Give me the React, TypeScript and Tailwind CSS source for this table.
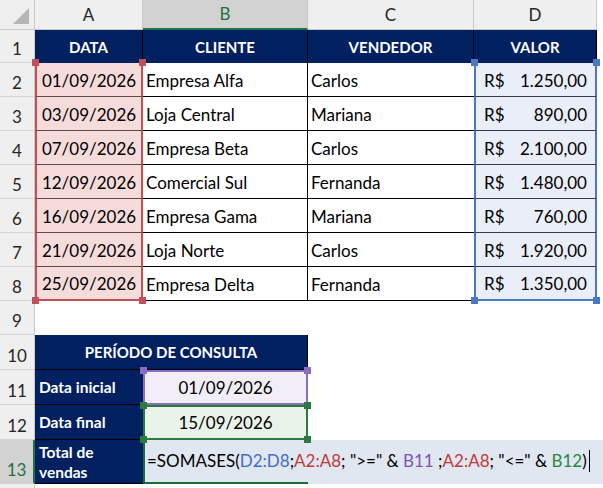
const data = [
  { d: "01/09/2026", c: "Empresa Alfa", v: "Carlos", val: "1.250,00" },
  { d: "03/09/2026", c: "Loja Central", v: "Mariana", val: "890,00" },
  { d: "07/09/2026", c: "Empresa Beta", v: "Carlos", val: "2.100,00" },
  { d: "12/09/2026", c: "Comercial Sul", v: "Fernanda", val: "1.480,00" },
  { d: "16/09/2026", c: "Empresa Gama", v: "Mariana", val: "760,00" },
  { d: "21/09/2026", c: "Loja Norte", v: "Carlos", val: "1.920,00" },
  { d: "25/09/2026", c: "Empresa Delta", v: "Fernanda", val: "1.350,00" },
];

const Handle = ({ className }: { className: string }) => (
  <span className={`absolute w-[7px] h-[7px] z-10 ${className}`} />
);

const RowHead = ({ n, active }: { n: number; active?: boolean }) => (
  <div
    className={`w-[35px] shrink-0 flex items-end justify-center pb-[2px] border-b border-[#d4d4d4] ${
      active ? "bg-[#d2d2d2] text-[#1e7145] border-r-2 border-r-[#1e7145]" : "bg-[#efefef] text-[#262626] border-r border-r-[#c8c8c8]"
    }`}
  >
    {n}
  </div>
);

export default function App() {
  return (
    <div className="w-[603px] h-[488px] overflow-hidden bg-white text-[17px] leading-[22px] text-black font-['Lato','Liberation_Sans',sans-serif]">
      {/* column letters */}
      <div className="flex h-[30px]">
        <div className="w-[35px] shrink-0 bg-[#efefef] border-r border-b border-[#c8c8c8] flex items-end justify-end p-[4px]">
          <svg width="18" height="18" viewBox="0 0 18 18">
            <polygon points="17,1 17,17 1,17" fill="#b5b5b5" />
          </svg>
        </div>
        <div className="w-[108px] shrink-0 bg-[#efefef] border-r border-b border-[#c8c8c8] flex items-center justify-center text-[#262626]">A</div>
        <div className="w-[165px] shrink-0 bg-[#d2d2d2] border-r border-r-[#c8c8c8] border-b-2 border-b-[#1e7145] flex items-center justify-center text-[#1e7145]">B</div>
        <div className="w-[166px] shrink-0 bg-[#efefef] border-r border-b border-[#c8c8c8] flex items-center justify-center text-[#262626]">C</div>
        <div className="w-[123px] shrink-0 bg-[#efefef] border-r border-b border-[#c8c8c8] flex items-center justify-center text-[#262626]">D</div>
        <div className="flex-1" />
      </div>

      {/* row 1 header */}
      <div className="flex h-[33px]">
        <RowHead n={1} />
        {["DATA", "CLIENTE", "VENDEDOR", "VALOR"].map((t, i) => (
          <div
            key={t}
            className={`shrink-0 bg-[#002060] text-white font-bold text-[15px] flex items-center justify-center border-r border-black ${
              ["w-[108px]", "w-[165px]", "w-[166px]", "w-[123px]"][i]
            }`}
          >
            {t}
          </div>
        ))}
      </div>

      {/* data rows */}
      {data.map((r, i) => {
        const first = i === 0;
        const last = i === data.length - 1;
        return (
          <div key={r.d} className="flex h-[34px]">
            <RowHead n={i + 2} />
            <div
              className={`relative w-[108px] shrink-0 bg-[#f6dbdb] border-x-2 border-x-[#c0505a] flex items-end justify-center pb-[4px] ${
                last ? "border-b-2 border-b-[#c0505a]" : "border-b border-b-[#5a4a4a]"
              }`}
            >
              {first && <Handle className="bg-[#c0505a] -left-[5px] -top-[4px]" />}
              {first && <Handle className="bg-[#c0505a] -right-[5px] -top-[4px]" />}
              {last && <Handle className="bg-[#c0505a] -left-[5px] -bottom-[5px]" />}
              {last && <Handle className="bg-[#c0505a] -right-[5px] -bottom-[5px]" />}
              {r.d}
            </div>
            <div className="w-[165px] shrink-0 border-r border-b border-black flex items-end pl-[3px] pb-[4px]">{r.c}</div>
            <div className="w-[166px] shrink-0 border-b border-black flex items-end pl-[3px] pb-[4px]">{r.v}</div>
            <div
              className={`relative w-[123px] shrink-0 bg-[#e9eef8] border-x-2 border-x-[#4a78c2] flex items-end justify-between pl-[8px] pr-[8px] pb-[4px] ${
                last ? "border-b-2 border-b-[#4a78c2]" : "border-b border-b-[#3a3a4a]"
              }`}
            >
              {first && <Handle className="bg-[#4a78c2] -left-[5px] -top-[4px]" />}
              {first && <Handle className="bg-[#4a78c2] -right-[5px] -top-[4px]" />}
              {last && <Handle className="bg-[#4a78c2] -left-[5px] -bottom-[5px]" />}
              {last && <Handle className="bg-[#4a78c2] -right-[5px] -bottom-[5px]" />}
              <span>R$</span>
              <span>{r.val}</span>
            </div>
          </div>
        );
      })}

      {/* row 9 */}
      <div className="flex h-[34px]">
        <RowHead n={9} />
      </div>

      {/* row 10 */}
      <div className="flex h-[35px]">
        <RowHead n={10} />
        <div className="w-[273px] shrink-0 bg-[#002060] text-white font-bold text-[15px] flex items-center justify-center border-b border-r border-black">
          PERÍODO DE CONSULTA
        </div>
      </div>

      {/* row 11 */}
      <div className="flex h-[35px]">
        <RowHead n={11} />
        <div className="w-[108px] shrink-0 bg-[#002060] text-white font-bold text-[15.5px] flex items-center pl-[4px] border-b border-black">
          Data inicial
        </div>
        <div className="relative w-[165px] shrink-0 bg-[#f2eef8] border-2 border-[#8a6cc0] flex items-end justify-center pb-[4px]">
          <Handle className="bg-[#8a6cc0] -left-[5px] -top-[5px]" />
          <Handle className="bg-[#8a6cc0] -right-[5px] -top-[5px]" />
          01/09/2026
        </div>
      </div>

      {/* row 12 */}
      <div className="flex h-[35px]">
        <RowHead n={12} />
        <div className="w-[108px] shrink-0 bg-[#002060] text-white font-bold text-[15.5px] flex items-center pl-[4px] border-b border-black">
          Data final
        </div>
        <div className="relative w-[165px] shrink-0 bg-[#e9f3e9] border-2 border-[#2a7a3e] flex items-end justify-center pb-[4px]">
          <Handle className="bg-[#2a7a3e] -left-[5px] -top-[5px]" />
          <Handle className="bg-[#2a7a3e] -right-[5px] -top-[5px]" />
          <Handle className="bg-[#2a7a3e] -left-[5px] -bottom-[5px]" />
          <Handle className="bg-[#2a7a3e] -right-[5px] -bottom-[5px]" />
          15/09/2026
        </div>
      </div>

      {/* row 13 */}
      <div className="flex h-[44px]">
        <RowHead n={13} active />
        <div className="w-[108px] shrink-0 bg-[#002060] text-white font-bold text-[15.5px] leading-[20px] flex items-center pl-[4px] border-b border-black">
          Total de
          <br />
          vendas
        </div>
        <div className="relative flex-1 bg-[#e1e7f0] border-l-2 border-[#1e6b3a] flex items-center pl-[2px] pb-[2px] whitespace-nowrap">
          <span className="absolute left-0 bottom-0 w-[163px] h-[2px] bg-[#1e6b3a]" />
          <span>=SOMASES(</span>
          <span className="text-[#3f6fc4]">D2:D8</span>
          <span>;</span>
          <span className="text-[#c23a3a]">A2:A8</span>
          <span className="whitespace-pre">; "&gt;=" &amp; </span>
          <span className="text-[#7a55b8]">B11</span>
          <span className="whitespace-pre"> ;</span>
          <span className="text-[#c23a3a]">A2:A8</span>
          <span className="whitespace-pre">; "&lt;=" &amp; </span>
          <span className="text-[#1f8a45]">B12</span>
          <span>)</span>
          <span className="ml-[2px] w-px h-[22px] bg-black" />
        </div>
      </div>

      {/* row 14 sliver */}
      <div className="flex h-[10px]">
        <div className="w-[35px] shrink-0 bg-[#efefef] border-r border-[#c8c8c8]" />
      </div>
    </div>
  );
}
